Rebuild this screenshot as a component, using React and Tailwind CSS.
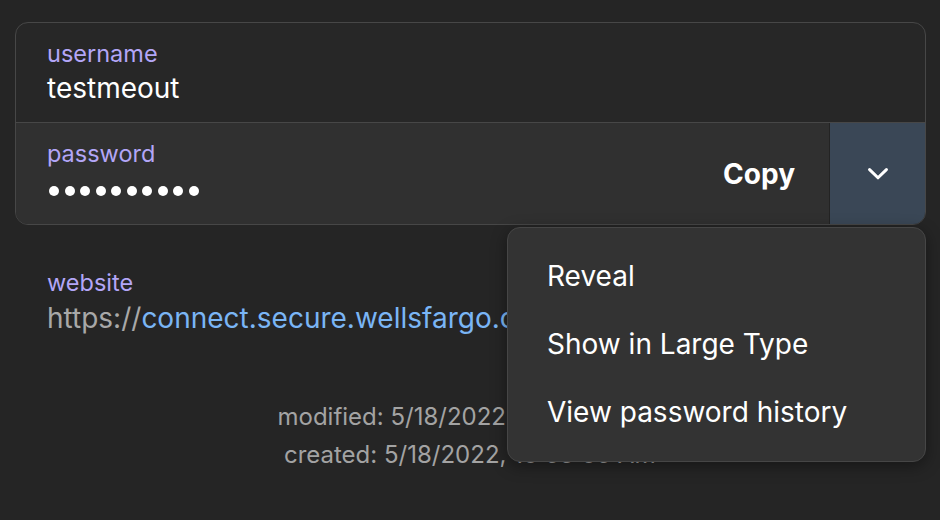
import React from "react";

function Chevron() {
  return (
    <svg width="20" height="12" viewBox="0 0 20 12" fill="none">
      <path d="M1.6 1.6 L10 9.8 L18.4 1.6" stroke="white" strokeWidth="3" strokeLinecap="round" strokeLinejoin="round" />
    </svg>
  );
}

export default function App() {
  return (
    <div
      className="relative w-[940px] h-[520px] overflow-hidden bg-[#252525] px-[15px] pt-[22px]"
      style={{ fontFamily: "Inter, 'Noto Sans', sans-serif" }}
    >
      <div className="w-[911px] rounded-[13px] border border-[#474747] overflow-hidden bg-[#272727]">
        <div className="h-[100px] px-[31px] pt-[17px] border-b border-[#474747]">
          <div className="text-[23.5px] leading-[28px] text-[#b3a6f7]">username</div>
          <div className="mt-[3px] text-[28px] leading-[34px] text-white">testmeout</div>
        </div>
        <div className="flex h-[101px] bg-[#303030]">
          <div className="flex-1 px-[31px] pt-[17px]">
            <div className="text-[23.5px] leading-[28px] text-[#b3a6f7]">password</div>
            <div className="flex gap-[5.5px] mt-[18px] ml-[2px]">
              {Array.from({ length: 10 }).map((_, i) => (
                <span key={i} className="block w-[10px] h-[10px] rounded-full bg-white" />
              ))}
            </div>
          </div>
          <div className="flex items-center pr-[34px] text-[28px] font-bold text-white">Copy</div>
          <div className="w-[96px] border-l border-[#232323] bg-[#3a4756] flex items-center justify-center">
            <Chevron />
          </div>
        </div>
      </div>

      <div className="px-[32px] pt-[44px]">
        <div className="text-[23.5px] leading-[28px] text-[#b3a6f7]">website</div>
        <div className="mt-[4px] text-[28px] leading-[34px] whitespace-nowrap">
          <span className="text-[#a8a8a8]">https://</span>
          <span className="text-[#7ab5f5]">connect.secure.wellsfargo.com/auth/login/present</span>
        </div>
      </div>

      <div className="mt-[63px] flex flex-col items-center text-[24px] leading-[38px] text-[#a3a3a3]">
        <div>modified: 5/18/2022, 10:53:05 AM</div>
        <div>created: 5/18/2022, 10:53:05 AM</div>
      </div>

      <div className="absolute left-[507px] top-[227px] w-[419px] h-[235px] rounded-[13px] border border-[#464646] bg-[#333333] shadow-[0_4px_16px_rgba(0,0,0,0.4)] pl-[39px] pt-[14px] text-[28px] leading-[68px] text-white">
        <div className="h-[68px] whitespace-nowrap">Reveal</div>
        <div className="h-[68px] whitespace-nowrap">Show in Large Type</div>
        <div className="h-[68px] whitespace-nowrap">View password history</div>
      </div>
    </div>
  );
}
